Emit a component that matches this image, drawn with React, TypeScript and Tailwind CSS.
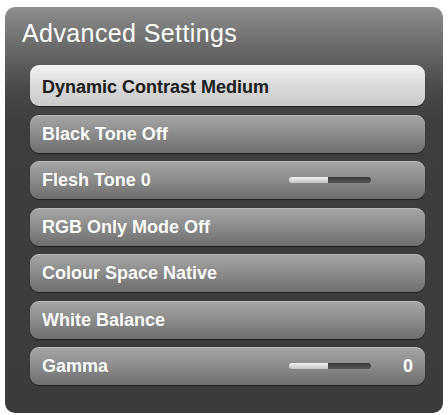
import React from "react";

type Row = {
  label: string;
  slider?: boolean;
  value?: string;
};

const rows: Row[] = [
  { label: "Dynamic Contrast Medium" },
  { label: "Black Tone Off" },
  { label: "Flesh Tone 0", slider: true },
  { label: "RGB Only Mode Off" },
  { label: "Colour Space Native" },
  { label: "White Balance" },
  { label: "Gamma", slider: true, value: "0" },
];

const Slider: React.FC = () => (
  <div className="flex h-[6px] w-[82px] overflow-hidden rounded-full">
    <div className="h-full w-[39px] bg-[linear-gradient(#f2f2f2,#c4c4c4)]" />
    <div className="h-full flex-1 bg-[linear-gradient(#3a3a3a,#555555)]" />
  </div>
);

const SettingRow: React.FC<{ row: Row; selected: boolean }> = ({ row, selected }) => (
  <div
    className={
      selected
        ? "flex h-[41px] items-center rounded-[9px] bg-[linear-gradient(#f4f4f4_0%,#dcdcdc_45%,#c9c9c9_100%)] pt-[3px] pl-[12px] text-[#1e1e1e] shadow-[0_1px_1px_rgba(0,0,0,0.5)]"
        : "flex h-[38px] items-center rounded-[9px] bg-[linear-gradient(#a6a6a6_0%,#8e8e8e_45%,#6e6e6e_100%)] pl-[12px] text-white shadow-[inset_0_1px_0_rgba(255,255,255,0.25),0_1px_1px_rgba(0,0,0,0.5)]"
    }
  >
    <span className="flex-1 text-[18px] font-bold leading-[22px] [text-shadow:0_0_1px_rgba(0,0,0,0.15)]">
      {row.label}
    </span>
    {row.slider && <Slider />}
    <span className="w-[54px] pr-[12px] text-right text-[18px] font-bold leading-[22px]">
      {row.value ?? ""}
    </span>
  </div>
);

export default function App() {
  return (
    <div
      className="h-[415px] w-[448px] overflow-hidden bg-white pt-[7px] pl-[5px]"
      style={{ fontFamily: '"Liberation Sans", Arial, sans-serif' }}
    >
      <div className="flex h-[406px] w-[438px] flex-col rounded-[10px] bg-[linear-gradient(#8e8e8e_0px,#6a6a6a_40px,#4a4a4b_80px,#3e3e40_115px,#3b3b3d_100%)] pt-[11px] pl-[25px] pr-[18px]">
        <h1 className="-ml-[8px] text-[25px] leading-[30px] tracking-[0.4px] text-white">
          Advanced Settings
        </h1>
        <div className="mt-[17px] flex flex-col gap-[8.5px]">
          {rows.map((row, i) => (
            <SettingRow key={row.label} row={row} selected={i === 0} />
          ))}
        </div>
      </div>
    </div>
  );
}
